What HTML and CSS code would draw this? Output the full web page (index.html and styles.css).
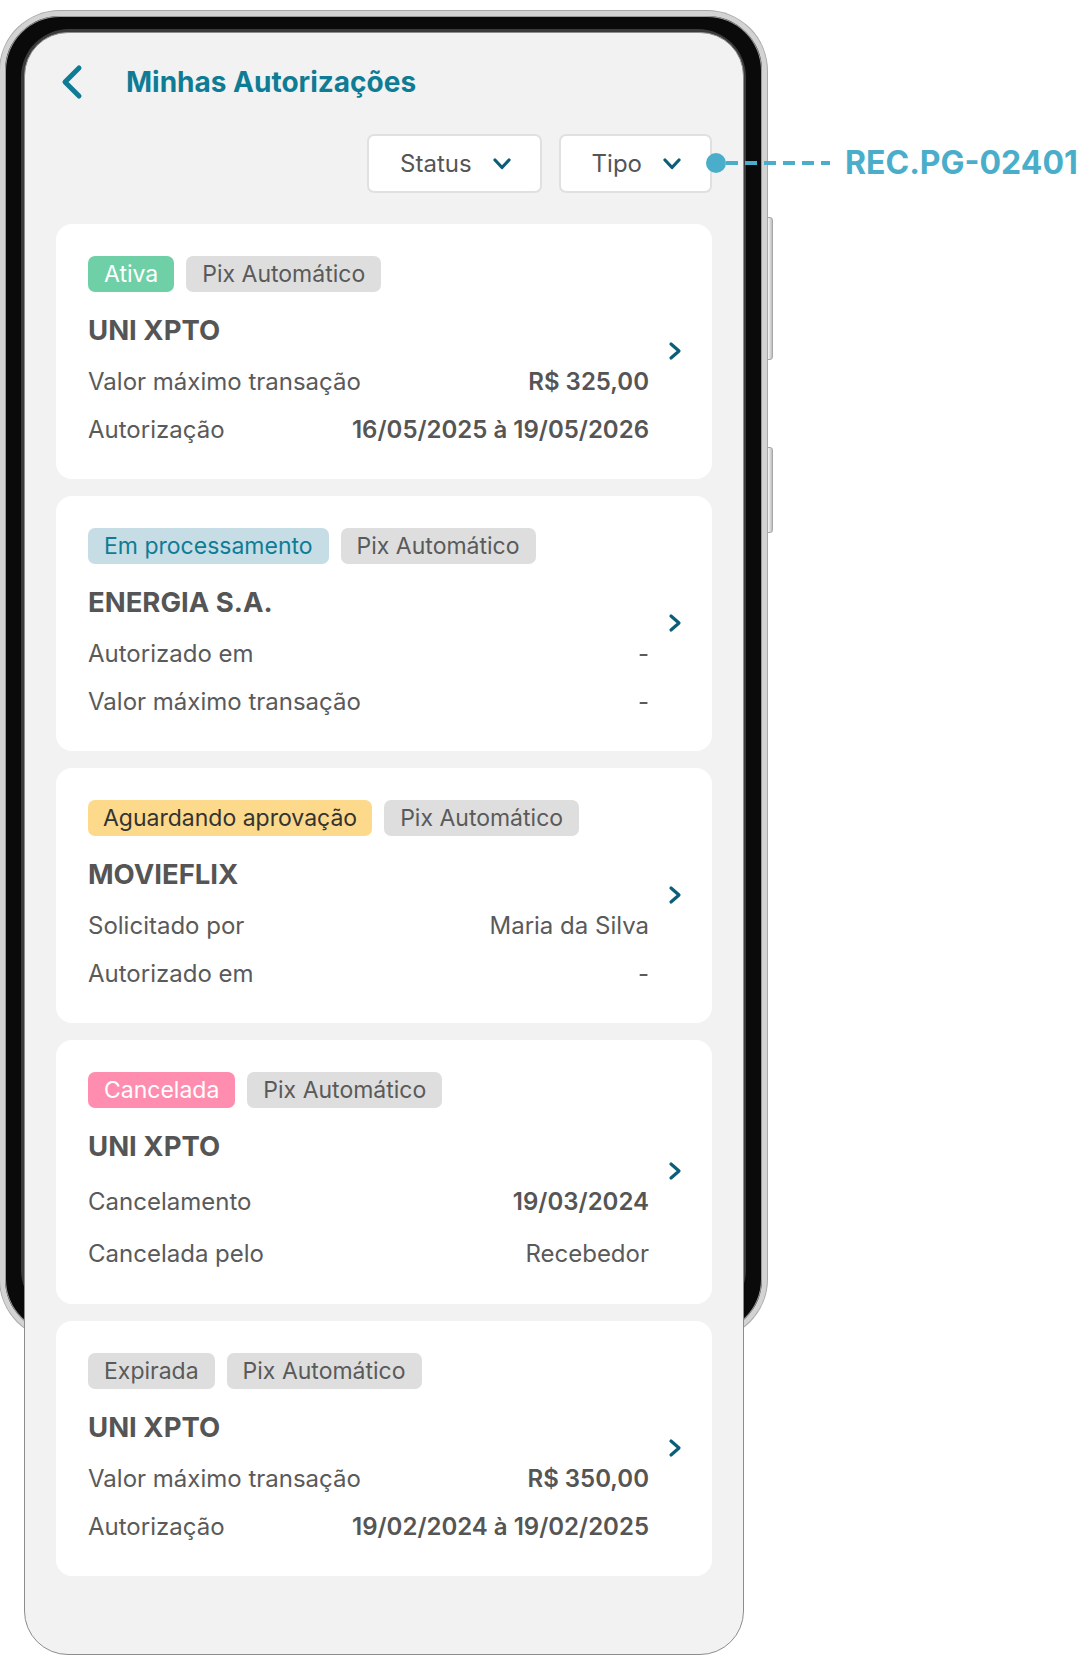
FILE: index.html
```html
<!DOCTYPE html>
<html lang="pt-BR">

<head>
    <meta charset="UTF-8">
    <meta name="viewport" content="width=device-width, initial-scale=1.0">
    <title>Minhas Autorizações</title>
    <link rel="stylesheet" href="styles.css">
</head>

<body>
    <div class="stage">

        <!-- Phone mockup -->
        <div class="side-btn side-btn-top"></div>
        <div class="side-btn side-btn-bottom"></div>
        <div class="device"></div>

        <div class="screen">
            <header class="app-header">
                <svg class="back" width="24" height="36" viewBox="0 0 24 36">
                    <path d="M19 4 L5 18 L19 32" />
                </svg>
                <h1>Minhas Autorizações</h1>
            </header>

            <div class="filters">
                <div class="filter">
                    <span>Status</span>
                    <svg class="caret" width="18" height="12" viewBox="0 0 18 12">
                        <path d="M2 2 L9 9.5 L16 2" />
                    </svg>
                </div>
                <div class="filter">
                    <span>Tipo</span>
                    <svg class="caret" width="18" height="12" viewBox="0 0 18 12">
                        <path d="M2 2 L9 9.5 L16 2" />
                    </svg>
                </div>
            </div>

            <div class="cards">

                <!-- Ativa -->
                <div class="card">
                    <div class="card-body">
                        <div class="tags">
                            <span class="tag tag-ativa">Ativa</span>
                            <span class="tag">Pix Automático</span>
                        </div>
                        <h3 class="card-title">UNI XPTO</h3>
                        <div class="rows">
                            <div class="row"><span>Valor máximo transação</span><span class="value strong">R$ 325,00</span></div>
                            <div class="row"><span>Autorização</span><span class="value strong">16/05/2025 à 19/05/2026</span></div>
                        </div>
                    </div>
                    <svg class="chev" width="14" height="20" viewBox="0 0 14 20">
                        <path d="M3 3 L11 10 L3 17" />
                    </svg>
                </div>

                <!-- Em processamento -->
                <div class="card">
                    <div class="card-body">
                        <div class="tags">
                            <span class="tag tag-proc">Em processamento</span>
                            <span class="tag">Pix Automático</span>
                        </div>
                        <h3 class="card-title">ENERGIA S.A.</h3>
                        <div class="rows">
                            <div class="row"><span>Autorizado em</span><span class="value">-</span></div>
                            <div class="row"><span>Valor máximo transação</span><span class="value">-</span></div>
                        </div>
                    </div>
                    <svg class="chev" width="14" height="20" viewBox="0 0 14 20">
                        <path d="M3 3 L11 10 L3 17" />
                    </svg>
                </div>

                <!-- Aguardando aprovação -->
                <div class="card">
                    <div class="card-body">
                        <div class="tags">
                            <span class="tag tag-aguard">Aguardando aprovação</span>
                            <span class="tag">Pix Automático</span>
                        </div>
                        <h3 class="card-title">MOVIEFLIX</h3>
                        <div class="rows">
                            <div class="row"><span>Solicitado por</span><span class="value">Maria da Silva</span></div>
                            <div class="row"><span>Autorizado em</span><span class="value">-</span></div>
                        </div>
                    </div>
                    <svg class="chev" width="14" height="20" viewBox="0 0 14 20">
                        <path d="M3 3 L11 10 L3 17" />
                    </svg>
                </div>

                <!-- Cancelada -->
                <div class="card card-loose">
                    <div class="card-body">
                        <div class="tags">
                            <span class="tag tag-cancel">Cancelada</span>
                            <span class="tag">Pix Automático</span>
                        </div>
                        <h3 class="card-title">UNI XPTO</h3>
                        <div class="rows">
                            <div class="row"><span>Cancelamento</span><span class="value strong">19/03/2024</span></div>
                            <div class="row"><span>Cancelada pelo</span><span class="value">Recebedor</span></div>
                        </div>
                    </div>
                    <svg class="chev" width="14" height="20" viewBox="0 0 14 20">
                        <path d="M3 3 L11 10 L3 17" />
                    </svg>
                </div>

                <!-- Expirada -->
                <div class="card">
                    <div class="card-body">
                        <div class="tags">
                            <span class="tag">Expirada</span>
                            <span class="tag">Pix Automático</span>
                        </div>
                        <h3 class="card-title">UNI XPTO</h3>
                        <div class="rows">
                            <div class="row"><span>Valor máximo transação</span><span class="value strong">R$ 350,00</span></div>
                            <div class="row"><span>Autorização</span><span class="value strong">19/02/2024 à 19/02/2025</span></div>
                        </div>
                    </div>
                    <svg class="chev" width="14" height="20" viewBox="0 0 14 20">
                        <path d="M3 3 L11 10 L3 17" />
                    </svg>
                </div>

            </div>
        </div>

        <!-- Spec annotation -->
        <div class="callout">
            <span class="callout-dot"></span>
            <span class="callout-line"></span>
            <span class="callout-label">REC.PG-02401</span>
        </div>

    </div>
</body>

</html>
```

FILE: styles.css
```css
body {
    margin: 0;
    background: #fff;
    font-family: 'Inter', 'Noto Sans', sans-serif;
    color: #555;
}

.stage {
    position: relative;
    width: 1080px;
    height: 1656px;
    overflow: hidden;
}

/* Phone frame */
.device {
    position: absolute;
    left: 0;
    top: 11px;
    width: 767px;
    height: 1328px;
    box-sizing: border-box;
    border: 5px solid #d3d3d3;
    border-radius: 60px;
    background: #0a0a0a;
    box-shadow: 0 0 0 1px #a9a9a9, inset 0 0 0 1px #9a9a9a;
}

.device::before {
    content: "";
    position: absolute;
    left: 16px;
    right: 16px;
    top: 13px;
    bottom: 16px;
    border-radius: 48px;
    background: #3b3b3b;
}

.side-btn {
    position: absolute;
    left: 762px;
    width: 9px;
    border: 1px solid #a8a8a8;
    border-radius: 3px;
    background: linear-gradient(90deg, #cfcfcf, #f2f2f2 60%, #bdbdbd);
}

.side-btn-top {
    top: 217px;
    height: 141px;
}

.side-btn-bottom {
    top: 447px;
    height: 84px;
}

.screen {
    position: absolute;
    left: 24px;
    top: 32px;
    width: 720px;
    height: 1623px;
    box-sizing: border-box;
    border: 1px solid #8c8c8c;
    border-radius: 44px;
    background: #f2f2f2;
    overflow: hidden;
}

/* Header */
.app-header {
    display: flex;
    align-items: center;
    height: 36px;
    padding: 31px 0 0 35px;
}

.back {
    fill: none;
    stroke: #0f7c95;
    stroke-width: 5;
    stroke-linecap: round;
    stroke-linejoin: round;
}

.app-header h1 {
    margin: 0 0 0 42px;
    font-size: 28px;
    line-height: 36px;
    font-weight: 700;
    color: #0f7c95;
}

/* Filters */
.filters {
    display: flex;
    justify-content: flex-end;
    gap: 17px;
    margin: 34px 31px 0 0;
}

.filter {
    display: flex;
    align-items: center;
    gap: 21px;
    height: 59px;
    box-sizing: border-box;
    padding: 0 29px 0 31px;
    background: #fff;
    border: 2px solid #e0e0e0;
    border-radius: 7px;
    font-size: 24px;
    color: #555;
}

.caret,
.chev {
    flex-shrink: 0;
    fill: none;
    stroke: #0b5e78;
    stroke-width: 3.2;
    stroke-linecap: round;
    stroke-linejoin: round;
}

/* Cards */
.cards {
    display: flex;
    flex-direction: column;
    gap: 17px;
    padding: 31px 31px 0 31px;
}

.card {
    display: flex;
    align-items: center;
    gap: 19px;
    padding: 32px 30px 33px 32px;
    background: #fff;
    border-radius: 16px;
}

.card-body {
    flex: 1;
    min-width: 0;
}

.tags {
    display: flex;
    gap: 12px;
}

.tag {
    display: inline-flex;
    align-items: center;
    height: 36px;
    padding: 0 16px;
    border-radius: 7px;
    background: #dedede;
    color: #5a5a5a;
    font-size: 23px;
}

.tag-ativa {
    background: #6fd0a7;
    color: #fff;
}

.tag-proc {
    background: #c6dde5;
    color: #0f7c95;
}

.tag-aguard {
    background: #fcd98b;
    color: #333;
    padding: 0 15px;
}

.tag-cancel {
    background: #ff8db0;
    color: #fff;
}

.card-title {
    margin: 21px 0 0;
    font-size: 27.5px;
    line-height: 34px;
    font-weight: 700;
    color: #555;
}

.rows {
    display: flex;
    flex-direction: column;
    gap: 16px;
    margin-top: 19px;
}

.row {
    display: flex;
    justify-content: space-between;
    font-size: 24px;
    line-height: 32px;
    color: #5a5a5a;
}

.value.strong {
    font-weight: 600;
    color: #555;
}

.card-loose {
    padding-bottom: 34px;
}

.card-loose .rows {
    margin-top: 23px;
    gap: 20px;
}

/* Annotation */
.callout {
    position: absolute;
    left: 706px;
    top: 147px;
    display: flex;
    align-items: center;
}

.callout-dot {
    width: 20px;
    height: 20px;
    border-radius: 50%;
    background: #4aaecb;
}

.callout-line {
    width: 104px;
    height: 4px;
    background: repeating-linear-gradient(90deg, #4aaecb 0 12px, transparent 12px 19px);
}

.callout-label {
    margin-left: 15px;
    font-size: 32px;
    line-height: 1;
    font-weight: 700;
    color: #4aaecb;
}
```
